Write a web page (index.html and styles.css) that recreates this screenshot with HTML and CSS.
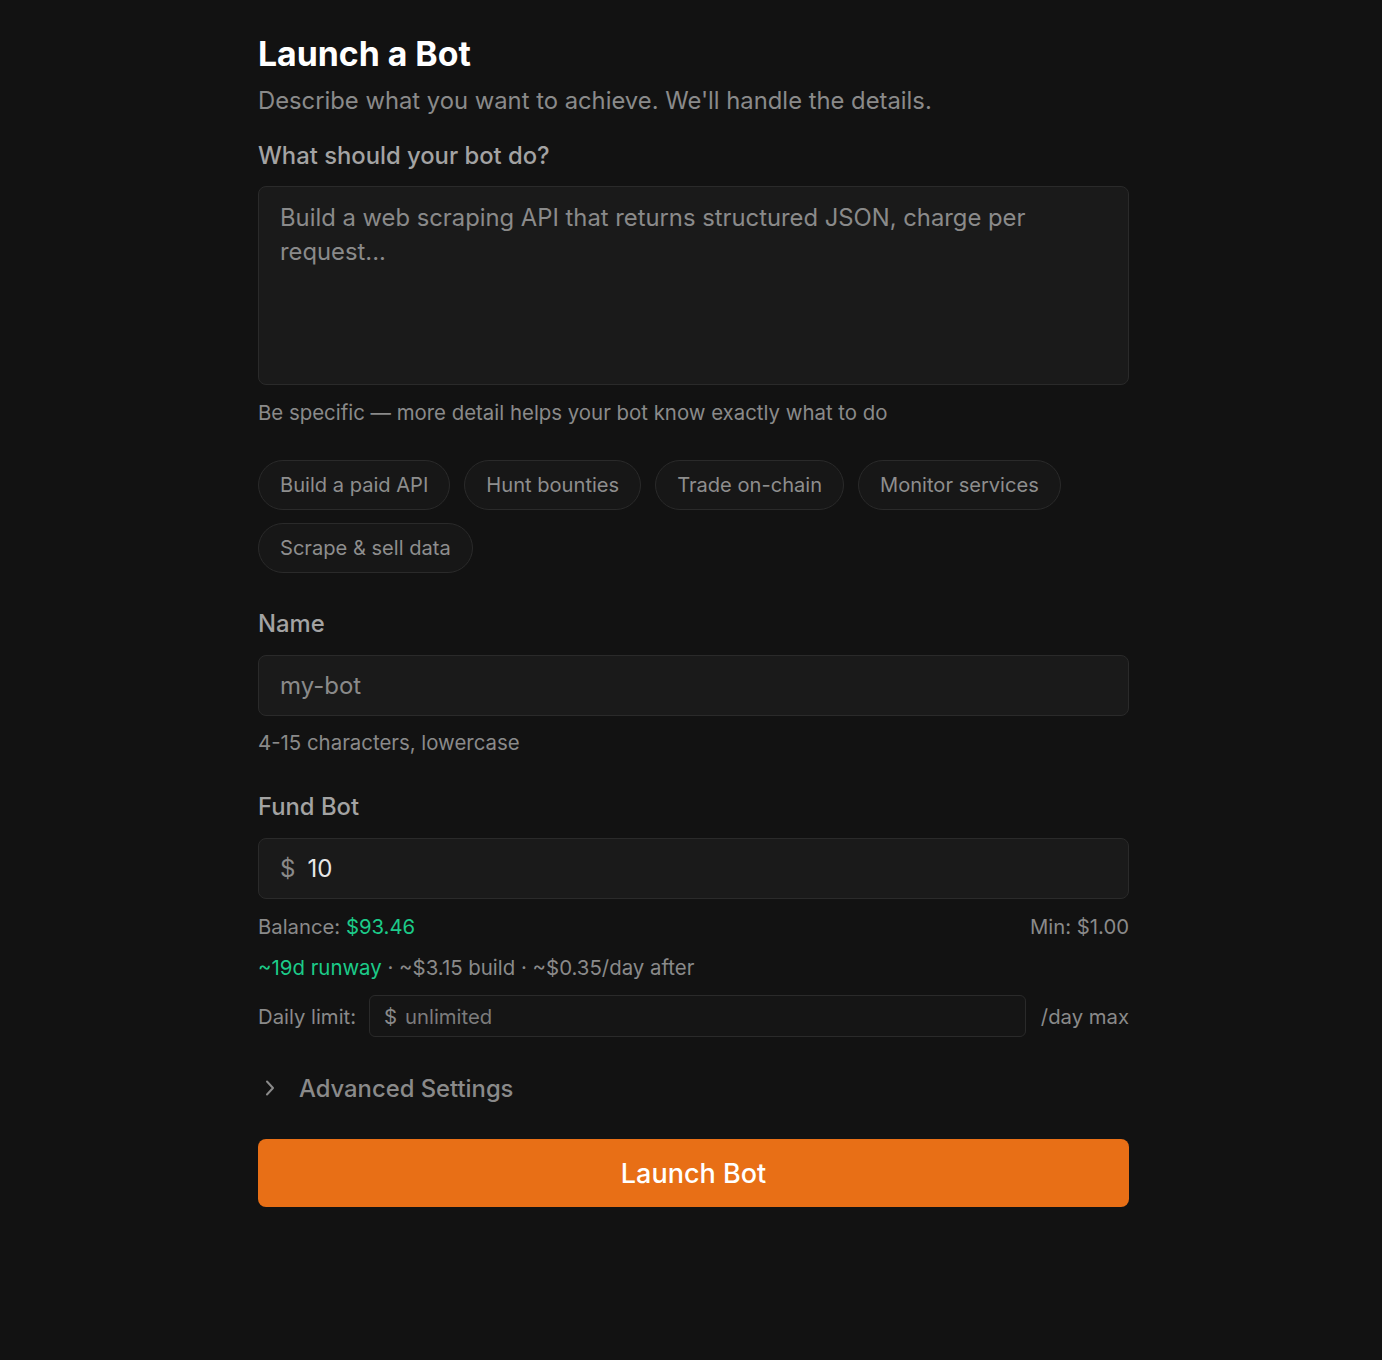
FILE: index.html
```html
<!DOCTYPE html>
<html lang="en">
<head>
<meta charset="utf-8">
<title>Launch a Bot</title>
<link rel="stylesheet" href="styles.css">
</head>
<body>
<main class="page">
  <h1 class="title">Launch a Bot</h1>
  <p class="subtitle">Describe what you want to achieve. We'll handle the details.</p>

  <label class="label label-first">What should your bot do?</label>
  <div class="textarea">
    <span class="placeholder">Build a web scraping API that returns structured JSON, charge per request...</span>
  </div>
  <p class="hint">Be specific — more detail helps your bot know exactly what to do</p>

  <div class="chips">
    <span class="chip">Build a paid API</span>
    <span class="chip">Hunt bounties</span>
    <span class="chip">Trade on-chain</span>
    <span class="chip">Monitor services</span>
    <span class="chip">Scrape &amp; sell data</span>
  </div>

  <label class="label label-name">Name</label>
  <div class="input"><span class="placeholder">my-bot</span></div>
  <p class="hint hint-name">4-15 characters, lowercase</p>

  <label class="label label-fund">Fund Bot</label>
  <div class="input"><span class="dollar">$</span><span class="value">10</span></div>

  <div class="balance-row">
    <span>Balance: <span class="green">$93.46</span></span>
    <span>Min: $1.00</span>
  </div>
  <div class="runway"><span class="green">~19d runway</span> · ~$3.15 build · ~$0.35/day after</div>

  <div class="limit-row">
    <span class="limit-label">Daily limit:</span>
    <div class="limit-input"><span class="dollar-sm">$</span><span class="placeholder-sm">unlimited</span></div>
    <span class="limit-suffix">/day max</span>
  </div>

  <div class="advanced">
    <svg class="chevron" width="16" height="18" viewBox="0 0 16 18" fill="none">
      <path d="M5 2.5 L11 9 L5 15.5" stroke="#8a8a8a" stroke-width="2" stroke-linecap="round" stroke-linejoin="round"/>
    </svg>
    <span>Advanced Settings</span>
  </div>

  <button class="launch">Launch Bot</button>
</main>
</body>
</html>
```

FILE: styles.css
```css
* { box-sizing: border-box; }
html, body {
  margin: 0;
  padding: 0;
  background: #121212;
}
body {
  font-family: Inter, "Noto Sans", "Liberation Sans", sans-serif;
  color: #8c8c8c;
  min-height: 1360px;
}
.page {
  width: 871px;
  margin-left: 258px;
  padding-top: 34px;
  padding-bottom: 60px;
  display: flex;
  flex-direction: column;
}
.title {
  margin: 0;
  font-size: 33.8px;
  line-height: 40px;
  font-weight: 700;
  color: #ffffff;
}
.subtitle {
  margin: 13px 0 0;
  font-size: 23.8px;
  line-height: 28px;
  color: #8a8a8a;
}
.label {
  display: block;
  font-size: 23.8px;
  line-height: 30px;
  font-weight: 500;
  color: #a3a3a3;
}
.label-first { margin-top: 26px; }
.label-name { margin-top: 36px; }
.label-fund { margin-top: 36px; }
.textarea {
  margin-top: 15px;
  height: 199px;
  background: #1a1a1a;
  border: 1px solid #2a2a2a;
  border-radius: 8px;
  padding: 14px 60px 0 21px;
  font-size: 23.8px;
  line-height: 34px;
}
.placeholder { color: #8a8a8a; }
.hint {
  margin: 15px 0 0;
  font-size: 20.4px;
  line-height: 26px;
  color: #8a8a8a;
}
.hint-name { margin-top: 14px; }
.chips {
  margin-top: 34px;
  display: flex;
  flex-wrap: wrap;
  column-gap: 14px;
  row-gap: 13px;
}
.chip {
  height: 50px;
  display: inline-flex;
  align-items: center;
  padding: 0 21px;
  border: 1px solid #2a2a2a;
  background: #171717;
  border-radius: 25px;
  font-size: 20.1px;
  color: #8e8e8e;
}
.input {
  margin-top: 16px;
  height: 61px;
  background: #1a1a1a;
  border: 1px solid #2a2a2a;
  border-radius: 8px;
  padding: 0 21px;
  display: flex;
  align-items: center;
  font-size: 24px;
}
.dollar {
  color: #8a8a8a;
  margin-right: 12px;
}
.value { color: #e8e8e8; }
.balance-row {
  margin-top: 15px;
  display: flex;
  justify-content: space-between;
  font-size: 20.3px;
  line-height: 26px;
  color: #8a8a8a;
}
.green { color: #1ccb89; }
.runway {
  margin-top: 15px;
  font-size: 20.4px;
  line-height: 26px;
  color: #8a8a8a;
}
.limit-row {
  margin-top: 14px;
  display: flex;
  align-items: center;
  gap: 13px;
  font-size: 20.3px;
  color: #8a8a8a;
}
.limit-suffix { margin-left: 2px; }
.limit-input {
  flex: 1;
  height: 42px;
  border: 1px solid #2a2a2a;
  background: #151515;
  border-radius: 6px;
  display: flex;
  align-items: center;
  padding: 0 14px;
}
.dollar-sm { margin-right: 8px; color: #8a8a8a; }
.placeholder-sm { color: #7c7c7c; }
.advanced {
  margin-top: 35px;
  display: flex;
  align-items: center;
  height: 32px;
  font-size: 23.8px;
  font-weight: 500;
  color: #8a8a8a;
}
.chevron {
  margin-left: 4px;
  margin-right: 21px;
}
.launch {
  margin-top: 35px;
  height: 68px;
  width: 100%;
  border: none;
  border-radius: 8px;
  background: #e86f16;
  color: #ffffff;
  font-family: inherit;
  font-size: 27px;
  font-weight: 500;
}
```
